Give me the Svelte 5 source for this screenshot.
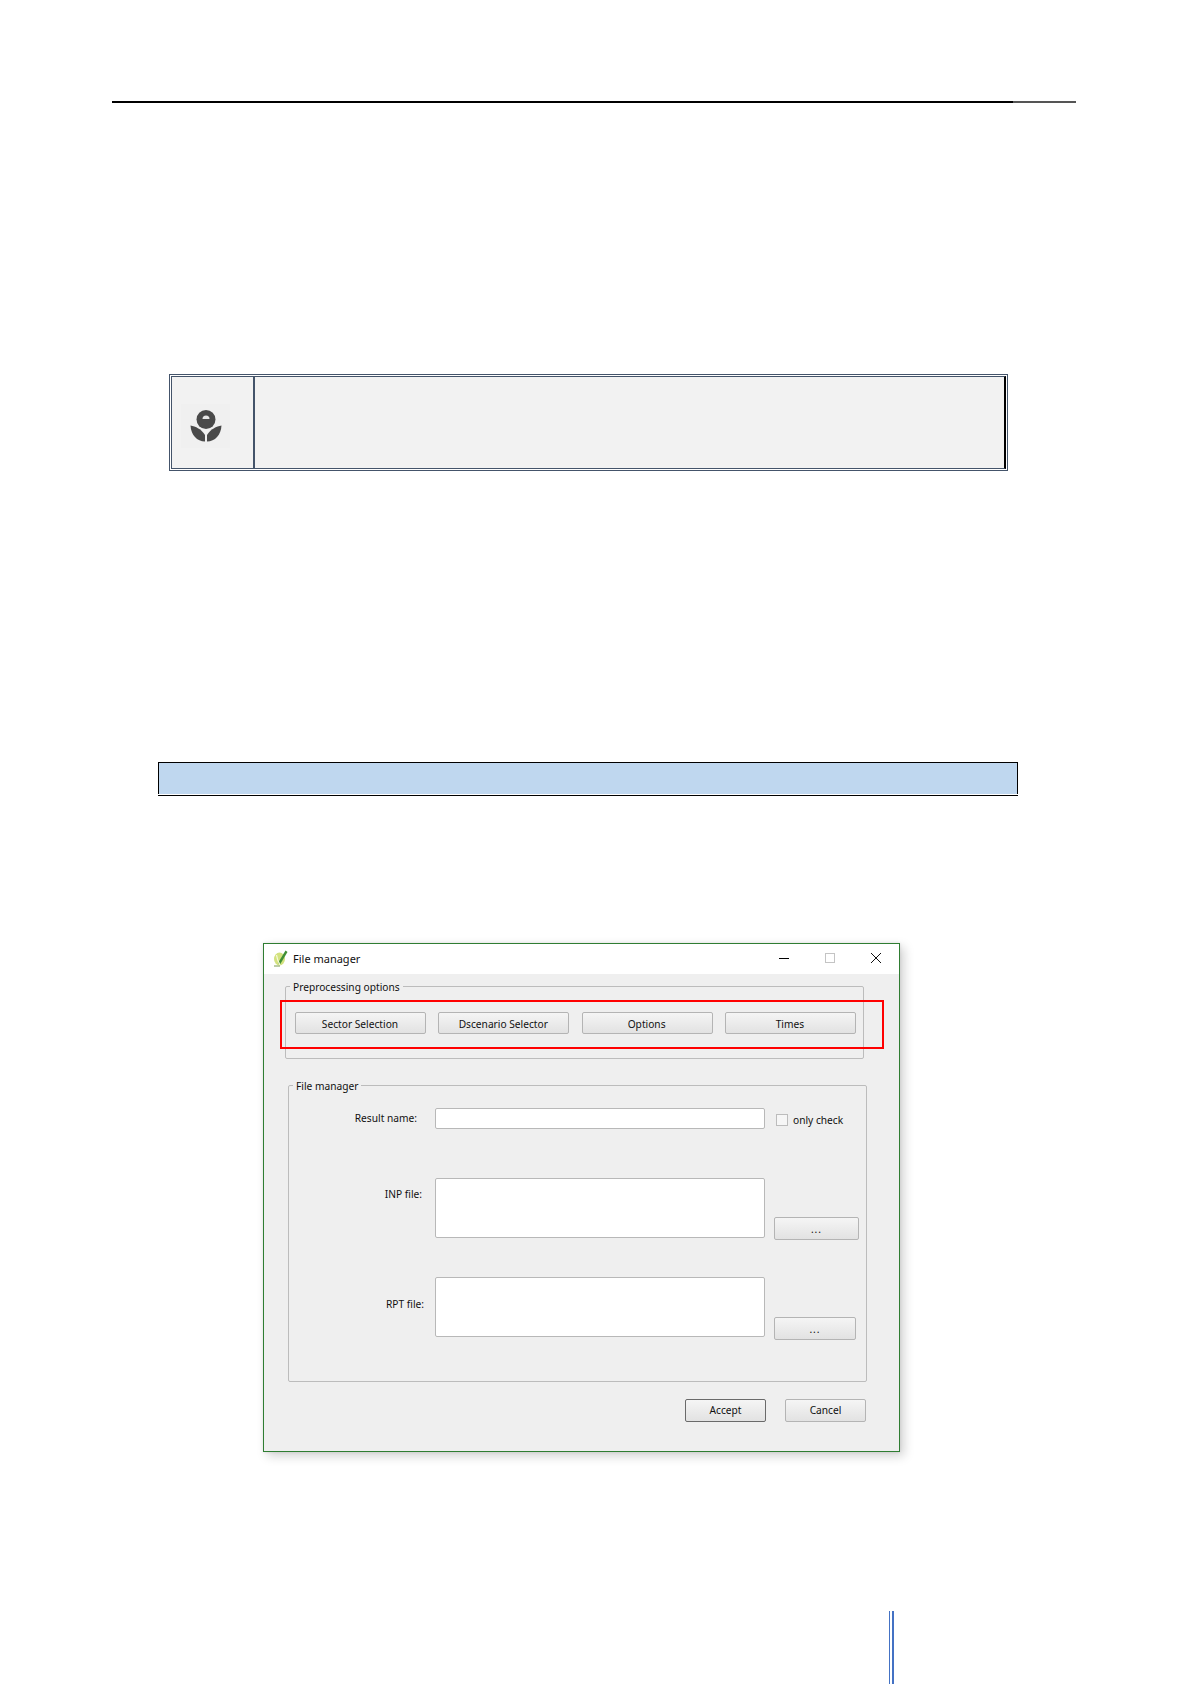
<script>
  const actions = ['Sector Selection', 'Dscenario Selector', 'Options', 'Times'];
</script>

<div class="page">
  <div class="head-rule"><span class="head-dark"></span><span class="head-grey"></span></div>

  <div class="note">
    <div class="note-inner">
      <div class="note-icon">
        <div class="icon-tile">
          <svg class="note-glyph" width="36" height="36" viewBox="0 0 36 36" aria-hidden="true">
            <circle cx="18" cy="11.5" r="9.5" fill="#4a4a4a" />
            <path d="M14.5 11a3.5 3.5 0 0 1 7 0z" fill="#e8e8e8" />
            <path d="M2.5 17.5c5 1 11 3.5 14.5 9.5v6.5C9 33.5 3 27 2.5 17.5z" fill="#4a4a4a" />
            <path d="M33.5 17.5c-5 1-11 3.5-14.5 9.5v6.5c8 0 14-6.5 14.5-16z" fill="#4a4a4a" />
          </svg>
        </div>
      </div>
      <div class="note-body"></div>
    </div>
  </div>

  <div class="band"><div class="band-fill"></div></div>

  <div class="dialog">
    <div class="titlebar">
      <svg class="app-icon" width="16" height="18" viewBox="0 0 16 18" aria-hidden="true">
        <ellipse cx="6.5" cy="10" rx="5.5" ry="6.5" fill="#d3e27f" />
        <path d="M5 14 12.5 1.5l2 1.5L7 15.5z" fill="#3f8f35" />
        <path d="M3.5 6c.5 3.5 1.5 6.5 3.5 10" stroke="#f6f8d8" stroke-width="1.3" fill="none" />
        <path d="M1 17h6" stroke="#7a9a50" />
      </svg>
      <span class="title">File manager</span>
      <div class="win-controls">
        <svg width="12" height="12" viewBox="0 0 12 12" aria-hidden="true"><path d="M1 6.5h10" stroke="#000" /></svg>
        <svg width="12" height="12" viewBox="0 0 12 12" aria-hidden="true"><rect x="1.5" y="1.5" width="9" height="9" fill="none" stroke="#c4c4c4" /></svg>
        <svg width="12" height="12" viewBox="0 0 12 12" aria-hidden="true"><path d="M1 1l10 10M11 1 1 11" stroke="#111" /></svg>
      </div>
    </div>

    <div class="client">
      <fieldset class="group preprocess">
        <legend>Preprocessing options</legend>
        <div class="actions">
          {#each actions as label}
            <button class="btn" type="button">{label}</button>
          {/each}
        </div>
      </fieldset>

      <fieldset class="group files">
        <legend>File manager</legend>
        <div class="row result">
          <span class="label">Result name:</span>
          <div class="field"></div>
          <label class="check"><span class="box"></span>only check</label>
        </div>
        <div class="row inp">
          <span class="label">INP file:</span>
          <div class="field"></div>
          <button class="btn browse wide" type="button">...</button>
        </div>
        <div class="row rpt">
          <span class="label">RPT file:</span>
          <div class="field"></div>
          <button class="btn browse" type="button">...</button>
        </div>
      </fieldset>

      <div class="footer">
        <button class="btn primary" type="button">Accept</button>
        <button class="btn" type="button">Cancel</button>
      </div>
    </div>

    <div class="highlight"></div>
  </div>

  <div class="side-rule"></div>
</div>

<style>
  :global(body) {
    margin: 0;
    background: #fff;
  }

  .page {
    display: flow-root;
    height: 1684px;
    overflow: hidden;
    font-family: "Noto Sans", "Liberation Sans", sans-serif;
    font-size: 10.2px;
    color: #111;
  }

  .head-rule {
    display: flex;
    width: 964px;
    margin: 101px 0 0 112px;
  }

  .head-dark {
    width: 901px;
    height: 2px;
    background: #000;
  }

  .head-grey {
    flex: 1;
    height: 2px;
    background: #555;
  }

  .note {
    box-sizing: border-box;
    width: 839px;
    height: 97px;
    margin: 271px 0 0 169px;
    padding: 1px;
    border: 1px solid #44546a;
  }

  .note-inner {
    box-sizing: border-box;
    display: flex;
    height: 100%;
    border: 1px solid #44546a;
    border-right: 2px solid #000;
    background: #f2f2f2;
  }

  .note-icon {
    box-sizing: border-box;
    width: 83px;
    padding: 27px 0 0 9px;
    border-right: 2px solid #44546a;
  }

  .icon-tile {
    display: flex;
    align-items: center;
    justify-content: center;
    width: 49px;
    height: 44px;
    background: #f0f0f0;
  }

  .note-glyph {
    filter: blur(0.4px);
  }

  .note-body {
    flex: 1;
  }

  .band {
    width: 860px;
    margin: 291px 0 0 158px;
    padding-bottom: 1px;
    border-bottom: 1px solid #000;
  }

  .band-fill {
    box-sizing: border-box;
    height: 32px;
    border: 1px solid #000;
    border-bottom: 0;
    background: #bfd7ef;
  }

  .dialog {
    position: relative;
    box-sizing: border-box;
    width: 637px;
    height: 509px;
    margin: 147px 0 0 263px;
    border: 1px solid #2f7d32;
    background: #efefef;
    box-shadow: 4px 4px 10px rgba(0, 0, 0, 0.18), 0 0 3px rgba(0, 0, 0, 0.1);
  }

  .titlebar {
    box-sizing: border-box;
    display: flex;
    align-items: center;
    height: 30px;
    padding: 0 17px 2px 9px;
    background: #fff;
  }

  .app-icon {
    margin-right: 4px;
  }

  .title {
    flex: 1;
    font-size: 11px;
  }

  .win-controls {
    display: flex;
    gap: 34px;
  }

  .client {
    padding: 5px 0 0 21px;
  }

  .group {
    box-sizing: border-box;
    min-width: 0;
    width: 579px;
    margin: 0;
    padding: 0;
    border: 1px solid #bcbcbc;
    border-radius: 2px;
  }

  .group legend {
    margin-left: 4px;
    padding: 2px 3px 0;
    line-height: 12px;
  }

  .preprocess {
    height: 80px;
  }

  .actions {
    display: flex;
    gap: 12.3px;
    padding: 19px 0 0 9px;
  }

  .actions .btn {
    width: 131px;
    padding: 1px 1px 0 0;
  }

  .btn {
    box-sizing: border-box;
    width: 81px;
    height: 22px;
    padding: 0 0 1px;
    border: 1px solid #b4b4b4;
    border-radius: 2px;
    background: linear-gradient(#f5f5f5, #e2e2e2);
    font: inherit;
    color: inherit;
  }

  .files {
    height: 304px;
    margin: 19px 0 0 3px;
  }

  .row {
    display: flex;
  }

  .result {
    height: 21px;
    margin-top: 16px;
  }

  .inp {
    height: 60px;
    margin-top: 49px;
  }

  .rpt {
    height: 60px;
    margin-top: 39px;
  }

  .label {
    box-sizing: border-box;
    width: 146px;
    padding: 1px 18px 0 0;
    text-align: right;
    line-height: 18px;
  }

  .inp .label {
    padding: 7px 13px 0 0;
  }

  .rpt .label {
    padding: 18px 11px 0 0;
  }

  .field {
    box-sizing: border-box;
    width: 330px;
    border: 1px solid #b8b8b8;
    border-radius: 2px;
    background: #fff;
  }

  .check {
    display: flex;
    align-items: center;
    gap: 5px;
    margin: 2px 0 0 11px;
  }

  .box {
    box-sizing: border-box;
    width: 12px;
    height: 12px;
    border: 1px solid #bcbcbc;
    background: #f6f6f6;
  }

  .browse {
    align-self: flex-end;
    width: 82px;
    height: 23px;
    margin: 0 0 -3px 9px;
    padding-bottom: 0;
    letter-spacing: 1px;
  }

  .browse.wide {
    width: 85px;
    margin-bottom: -2px;
  }

  .footer {
    display: flex;
    justify-content: flex-end;
    gap: 19px;
    width: 581px;
    margin-top: 17px;
  }

  .footer .btn {
    height: 23px;
  }

  .footer .primary {
    border-color: #6a6a6a;
  }

  /* red callout drawn over the button row */
  .highlight {
    position: absolute;
    top: 56px;
    left: 16px;
    box-sizing: border-box;
    width: 604px;
    height: 49px;
    border: 2px solid #f00;
  }

  .side-rule {
    box-sizing: border-box;
    width: 5px;
    height: 73px;
    margin: 159px 0 0 889px;
    border-left: 1px solid #4472c4;
    border-right: 2px solid #4472c4;
  }
</style>
